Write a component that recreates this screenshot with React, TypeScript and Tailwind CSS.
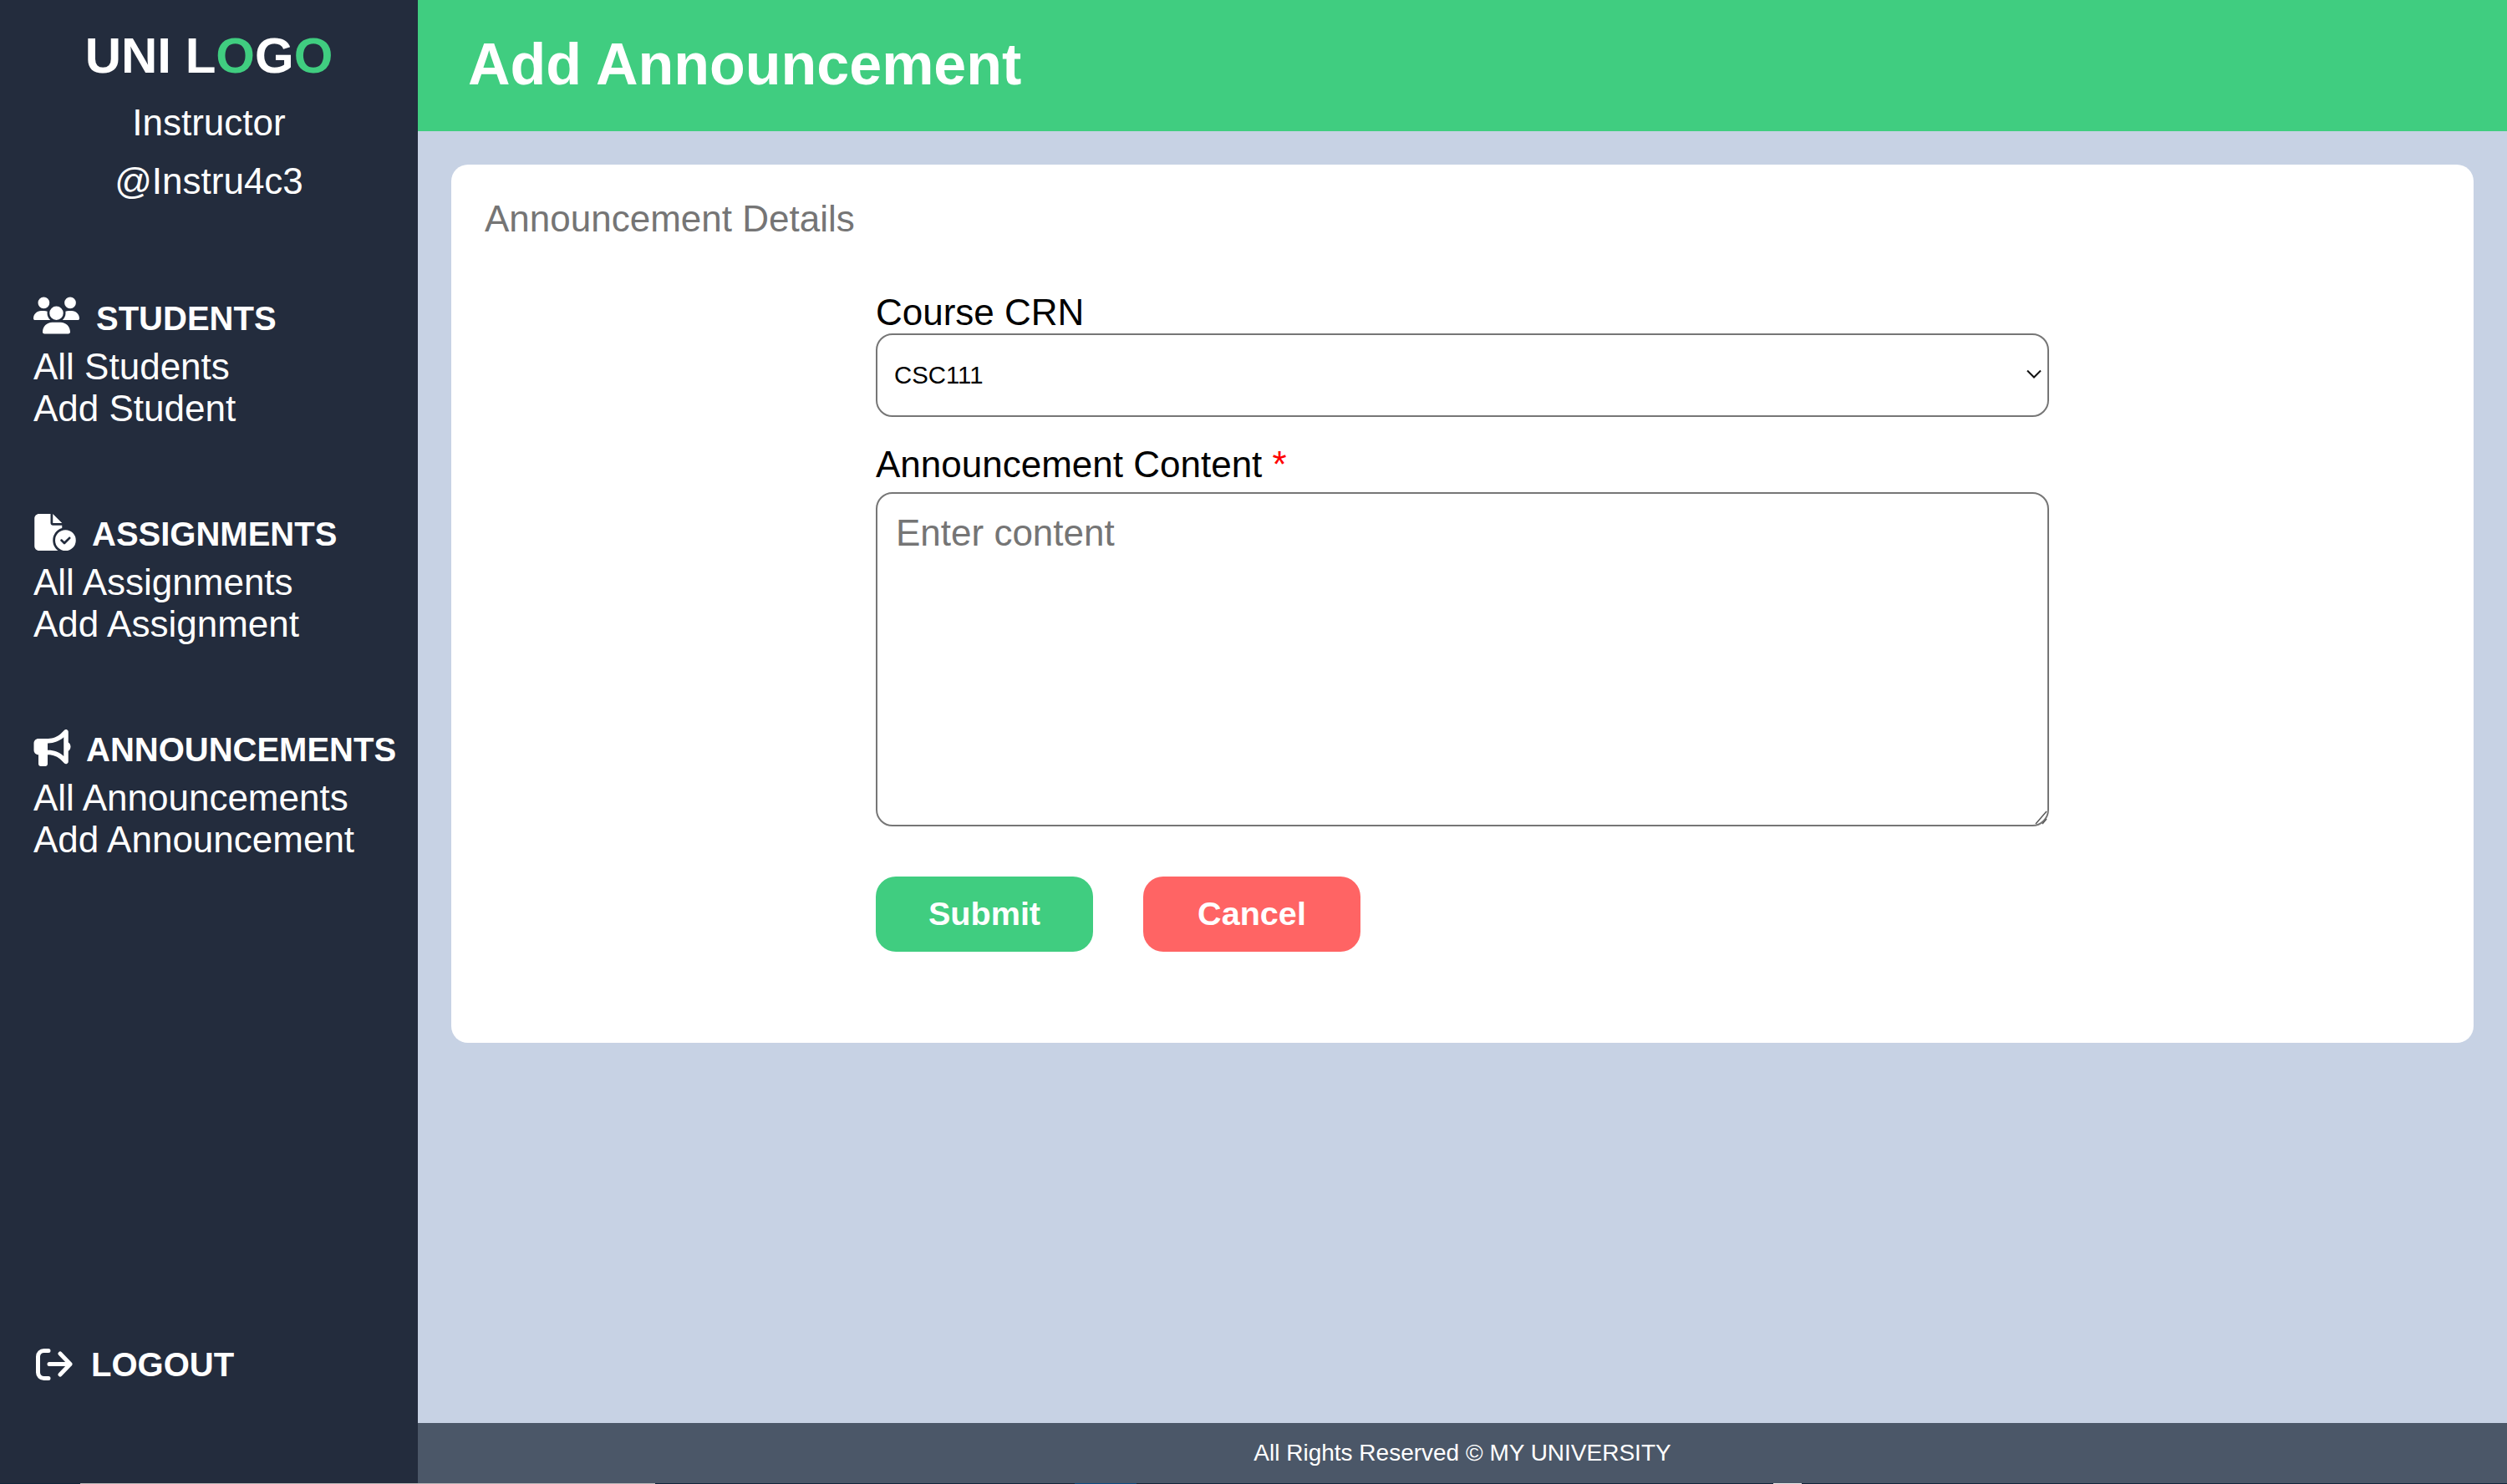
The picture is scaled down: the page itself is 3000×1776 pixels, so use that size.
import { FaUsers, FaFileCircleCheck, FaBullhorn } from "react-icons/fa6";
import type { ReactNode } from "react";

function NavGroup({ icon, title, links, gap }: { icon: ReactNode; title: string; links: string[]; gap: string }) {
  return (
    <div className="mb-[92px]">
      <div className="flex items-center h-[66px] text-[40px] leading-none font-bold text-white">
        {icon}
        <span className={gap}>{title}</span>
      </div>
      {links.map((l) => (
        <a key={l} className="block text-[44px] leading-[50px] text-white">
          {l}
        </a>
      ))}
    </div>
  );
}

export default function App() {
  return (
    <div className="flex flex-col h-[1776px] w-[3000px] overflow-hidden font-['Liberation_Sans',Arial,sans-serif]">
      <div className="flex flex-1 min-h-0 bg-[#c7d2e4]">
        <aside className="w-[500px] shrink-0 bg-[#232c3d] flex flex-col text-white pl-10">
          <div className="-ml-10 pt-[32px] text-center">
            <div className="text-[60px] leading-[70px] font-bold">
              UNI L<span className="text-[#40cd80]">O</span>G<span className="text-[#40cd80]">O</span>
            </div>
            <div className="mt-[10px] text-[44px] leading-[70px]">Instructor</div>
            <div className="text-[44px] leading-[70px]">@Instru4c3</div>
          </div>
          <nav className="mt-[96px]">
            <NavGroup icon={<FaUsers className="w-[55px] h-[45px] -mt-[8px]" />} title="STUDENTS" gap="ml-5" links={["All Students", "Add Student"]} />
            <NavGroup icon={<FaFileCircleCheck className="w-[52px] h-[44px] -mt-[4px]" />} title="ASSIGNMENTS" gap="ml-[18px]" links={["All Assignments", "Add Assignment"]} />
            <NavGroup icon={<FaBullhorn className="w-[45px] h-[44px] -mt-[4px]" />} title="ANNOUNCEMENTS" gap="ml-[18px]" links={["All Announcements", "Add Announcement"]} />
          </nav>
          <div className="mt-auto mb-[112px] flex items-center text-[40px] font-bold">
            <svg viewBox="0 0 44 38" className="ml-[3px] w-[44px] h-[38px]" fill="none" stroke="currentColor" strokeWidth="5" strokeLinecap="round" strokeLinejoin="round">
              <path d="M15 2.5H9.5a7 7 0 0 0-7 7v19a7 7 0 0 0 7 7H15" />
              <path d="M16 18.5h25M29 6l12 12.5L29 31" />
            </svg>
            <span className="ml-[22px]">LOGOUT</span>
          </div>
        </aside>
        <div className="flex-1 flex flex-col">
          <header className="h-[157px] shrink-0 bg-[#40cd80] flex items-center pl-[60px] pb-[3px]">
            <h1 className="text-[70px] font-bold text-white">Add Announcement</h1>
          </header>
          <main className="flex-1 p-10">
            <section className="h-[1051px] rounded-[20px] bg-white p-10">
              <h2 className="text-[44px] leading-[50px] text-[#757575]">Announcement Details</h2>
              <form className="w-[1404px] ml-[468px] mt-[62px]">
                <label className="block text-[44px] leading-[50px] text-black">Course CRN</label>
                <div className="relative">
                  <select className="w-full h-[100px] rounded-[20px] border-2 border-[#767676] bg-white pl-5 text-[29.33px] text-black appearance-none">
                    <option>CSC111</option>
                  </select>
                  <svg viewBox="0 0 18 12" className="absolute right-[9px] top-[43px] w-[18px] h-[12px]" fill="none" stroke="#111" strokeWidth="2">
                    <path d="M1 1.5l8 8 8-8" />
                  </svg>
                </div>
                <label className="block mt-[32px] mb-[8px] text-[44px] leading-[50px] text-black">
                  Announcement Content <span className="text-[#ff0000]">*</span>
                </label>
                <div className="relative">
                  <textarea
                    placeholder="Enter content"
                    className="block w-full h-[400px] resize-none rounded-[20px] border-2 border-[#767676] bg-white px-[22px] py-[22px] text-[44px] leading-[50px] text-black placeholder:text-[#757575] outline-none"
                  />
                  {/* resize grip */}
                  <svg viewBox="0 0 20 22" className="absolute right-0 bottom-0 w-[20px] h-[22px]" fill="none" stroke="#5a5a5a" strokeWidth="1.5">
                    <path d="M4 19L17 4M12 19l5-6" />
                  </svg>
                </div>
                <div className="mt-[60px] flex gap-[60px]">
                  <button type="button" className="w-[260px] h-[90px] rounded-[24px] bg-[#40cd80] text-[39.6px] font-bold text-white">Submit</button>
                  <button type="button" className="w-[260px] h-[90px] rounded-[24px] bg-[#ff6464] text-[39.6px] font-bold text-white">Cancel</button>
                </div>
              </form>
            </section>
          </main>
          <footer className="h-[72px] shrink-0 bg-[#4b5768] flex items-center justify-center text-[28px] text-white">
            All Rights Reserved © MY UNIVERSITY
          </footer>
        </div>
      </div>
      {/* one pixel of the desktop taskbar shows at the very bottom */}
      <div className="flex h-px shrink-0 bg-[#13263a]">
        <div className="ml-[96px] w-[688px] bg-[#b9b9b9]" />
        <div className="ml-[502px] w-[74px] bg-[#0f4c81]" />
        <div className="ml-[762px] w-[34px] bg-[#e6e6e6]" />
      </div>
    </div>
  );
}
